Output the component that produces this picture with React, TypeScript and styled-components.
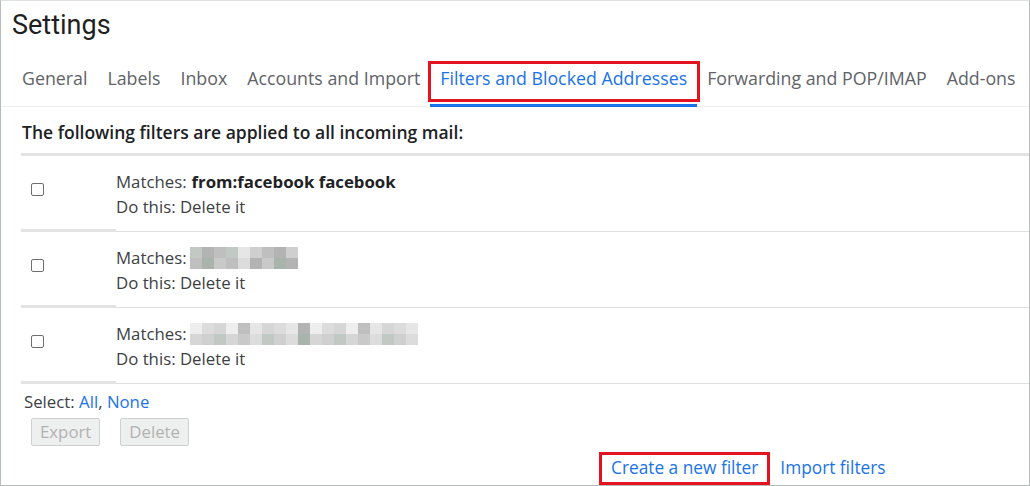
import React, { FC } from 'react';
import styled, { createGlobalStyle } from 'styled-components';

const GlobalStyle = createGlobalStyle`
  html, body {
    margin: 0;
    padding: 0;
    background: #ffffff;
  }
  body {
    font-family: 'Open Sans', Roboto, 'Liberation Sans', Arial, sans-serif;
    color: #222222;
  }
`;

const blue = '#1a73e8';
const marker = '#e3141f';

const Page = styled.div`
  width: 1030px;
  height: 486px;
  box-sizing: border-box;
  border: 1px solid #b5bcb9;
  border-top-color: #dfe3e1;
  display: flex;
  flex-direction: column;
  overflow: hidden;
`;

const Title = styled.h1`
  margin: 0;
  padding: 6px 0 0 11px;
  height: 40px;
  font-family: Roboto, 'Liberation Sans', Arial, sans-serif;
  font-size: 27px;
  font-weight: 400;
  color: #1f1f1f;
  line-height: 36px;
`;

const TabBar = styled.nav`
  display: flex;
  margin-top: 15px;
  padding-left: 11px;
  border-bottom: 1px solid #eceeef;
`;

const Tab = styled.div<{ active?: boolean }>`
  position: relative;
  padding: 5px 10px 15px;
  font-size: 17.8px;
  line-height: 22px;
  color: ${({ active }) => (active ? blue : '#5f6368')};
  border-bottom: 3px solid ${({ active }) => (active ? blue : 'transparent')};
  margin-bottom: -1px;
  white-space: nowrap;
`;

const Marker = styled.span`
  position: absolute;
  left: -2px;
  right: -3px;
  top: -1px;
  bottom: 2px;
  border: 3px solid ${marker};
  pointer-events: none;
`;

const Content = styled.section`
  padding: 0 0 0 20px;
`;

const Heading = styled.div`
  padding: 14px 0 0 1px;
  height: 32px;
  font-size: 17.5px;
  font-weight: 600;
  line-height: 22px;
  color: #202124;
  border-bottom: 3px solid #e3e3e3;
  white-space: nowrap;
`;

const Row = styled.div`
  display: grid;
  grid-template-columns: 95px 1fr;
  align-items: stretch;
`;

const CheckCell = styled.div`
  border-bottom: 3px solid #e3e3e3;
  padding: 27px 0 0 10px;
`;

const TextCell = styled.div`
  align-self: end;
  border-bottom: 1px solid #e0e0e0;
  padding: 13px 0 12px 0;
  font-size: 16.8px;
  line-height: 25px;
  color: #3c4043;
`;

const Box = styled.span`
  display: block;
  width: 11px;
  height: 11px;
  border: 1.5px solid #6f6f6f;
  border-radius: 2px;
`;

const Line = styled.div`
  display: flex;
  align-items: center;
  white-space: nowrap;
`;

const Strong = styled.b`
  font-weight: 700;
  color: #202124;
  margin-left: 5px;
`;

const Footer = styled.div`
  padding: 7px 0 0 23px;
  font-size: 16.8px;
  line-height: 22px;
  color: #3c4043;
`;

const Link = styled.span`
  color: ${blue};
`;

const Buttons = styled.div`
  display: flex;
  gap: 20px;
  margin: 5px 0 0 7px;
`;

const Button = styled.span`
  display: inline-flex;
  align-items: center;
  justify-content: center;
  height: 28px;
  box-sizing: border-box;
  padding: 0 8px;
  border: 1px solid #cfd1d1;
  border-radius: 2px;
  background: #eeefef;
  color: #b2b2b2;
  font-size: 16.8px;
`;

const Actions = styled.div`
  display: flex;
  gap: 22px;
  margin: 11px 0 0 610px;
  font-size: 17.3px;
  line-height: 22px;
`;

const Action = styled.span`
  position: relative;
  color: ${blue};
  white-space: nowrap;
`;

const ActionMarker = styled.span`
  position: absolute;
  left: -12px;
  right: -12px;
  top: -5px;
  bottom: -6px;
  border: 3px solid ${marker};
`;

const shades = ['#c9c9c9', '#d6d6d6', '#b3b3b3', '#e6e6e6', '#c2c8c4', '#a9b4ad', '#dcdcdc', '#bfbfbf', '#eeeeee', '#cfcfcf'];

const Mosaic: FC<{ cols: number; seed: number }> = ({ cols, seed }) => {
  const cells = [];
  for (let r = 0; r < 2; r++) {
    for (let c = 0; c < cols; c++) {
      const k = (c * 7 + r * 13 + seed * 3 + ((c * c + seed) % 5)) % shades.length;
      cells.push(<rect key={`${r}-${c}`} x={c * 12} y={r * 11} width={12} height={11} fill={shades[k]} />);
    }
  }
  return (
    <svg width={cols * 12} height={22} style={{ marginLeft: 3 }}>
      {cells}
    </svg>
  );
};

type Filter = { match?: string; blur?: number };

const filters: Filter[] = [{ match: 'from:facebook facebook' }, { blur: 9 }, { blur: 19 }];

const tabs = [
  'General',
  'Labels',
  'Inbox',
  'Accounts and Import',
  'Filters and Blocked Addresses',
  'Forwarding and POP/IMAP',
  'Add-ons',
];

const App: FC = () => (
  <Page>
    <GlobalStyle />
    <Title>Settings</Title>
    <TabBar>
      {tabs.map((t) => (
        <Tab key={t} active={t.startsWith('Filters')}>
          {t}
          {t.startsWith('Filters') && <Marker />}
        </Tab>
      ))}
    </TabBar>
    <Content>
      <Heading>The following filters are applied to all incoming mail:</Heading>
      {filters.map((f, i) => (
        <Row key={i}>
          <CheckCell>
            <Box />
          </CheckCell>
          <TextCell>
            <Line>
              Matches:
              {f.match ? <Strong>{f.match}</Strong> : <Mosaic cols={f.blur || 0} seed={i} />}
            </Line>
            <Line>Do this: Delete it</Line>
          </TextCell>
        </Row>
      ))}
    </Content>
    <Footer>
      Select: <Link>All</Link>, <Link>None</Link>
      <Buttons>
        <Button>Export</Button>
        <Button>Delete</Button>
      </Buttons>
    </Footer>
    <Actions>
      <Action>
        Create a new filter
        <ActionMarker />
      </Action>
      <Action>Import filters</Action>
    </Actions>
  </Page>
);

export default App;
